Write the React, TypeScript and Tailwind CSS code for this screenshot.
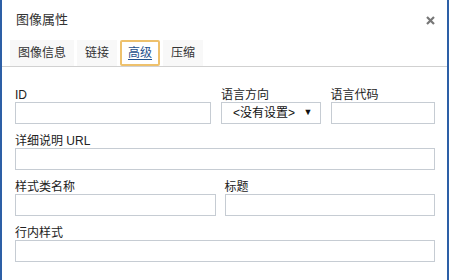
import React from 'react';

const font = { fontFamily: '"Liberation Sans", "Noto Sans CJK SC", sans-serif' };

const tabs = ['图像信息', '链接', '高级', '压缩'];

const Field: React.FC<{ label: string; className?: string; children?: React.ReactNode }> = ({
  label,
  className = '',
  children,
}) => (
  <div className={`flex flex-col ${className}`}>
    <label className="h-[14px] text-[12px] leading-[14px] text-[#222]">{label}</label>
    {children ?? <input type="text" className="h-[22px] w-full border border-[#c6ccd3] bg-white outline-none" />}
  </div>
);

export default function App() {
  return (
    <div className="h-[280px] w-[451px] bg-white" style={font}>
      <div className="flex h-[280px] w-[449px] flex-col border-x-2 border-[#2d5fa6] bg-white">
        {/* header */}
        <div className="flex h-[40px] items-center justify-between pl-[14px] pr-[12px]">
          <span className="text-[13px] text-[#333]">图像属性</span>
          <svg width="9" height="9" viewBox="0 0 9 9" className="mt-[1px]">
            <path d="M1 1 8 8M8 1 1 8" stroke="#777" strokeWidth="2.2" />
          </svg>
        </div>

        {/* tabs */}
        <div className="flex h-[27px] gap-[3px] border-b border-[#d1d1d1] pl-[8px]">
          {tabs.map((t) =>
            t === '高级' ? (
              <div
                key={t}
                className="flex h-[26px] w-[40px] items-center justify-center rounded-[2px] border-2 border-[#eec16c] bg-white text-[12px] text-[#1e4f8c] underline underline-offset-2"
              >
                {t}
              </div>
            ) : (
              <div
                key={t}
                className="flex h-[26px] items-center justify-center bg-[#f8f8f8] px-[8px] text-[12px] text-[#333]"
              >
                {t}
              </div>
            ),
          )}
        </div>

        {/* body */}
        <div className="flex flex-col gap-[10px] pl-[13px] pr-[12px] pt-[21px]">
          <div className="flex">
            <Field label="ID" className="w-[197px]" />
            <Field label="语言方向" className="ml-[10px] w-[100px]">
              <div className="flex h-[22px] items-center justify-between border border-[#c6ccd3] pl-[11px] pr-[7px] text-[12px] text-[#111]">
                <span>&lt;没有设置&gt;</span>
                <span className="text-[9px]">▼</span>
              </div>
            </Field>
            <Field label="语言代码" className="ml-[10px] w-[105px]" />
          </div>
          <Field label="详细说明 URL" />
          <div className="flex">
            <Field label="样式类名称" className="w-[201px]" />
            <Field label="标题" className="ml-[9px] w-[211px]" />
          </div>
          <Field label="行内样式" />
        </div>
      </div>
    </div>
  );
}
